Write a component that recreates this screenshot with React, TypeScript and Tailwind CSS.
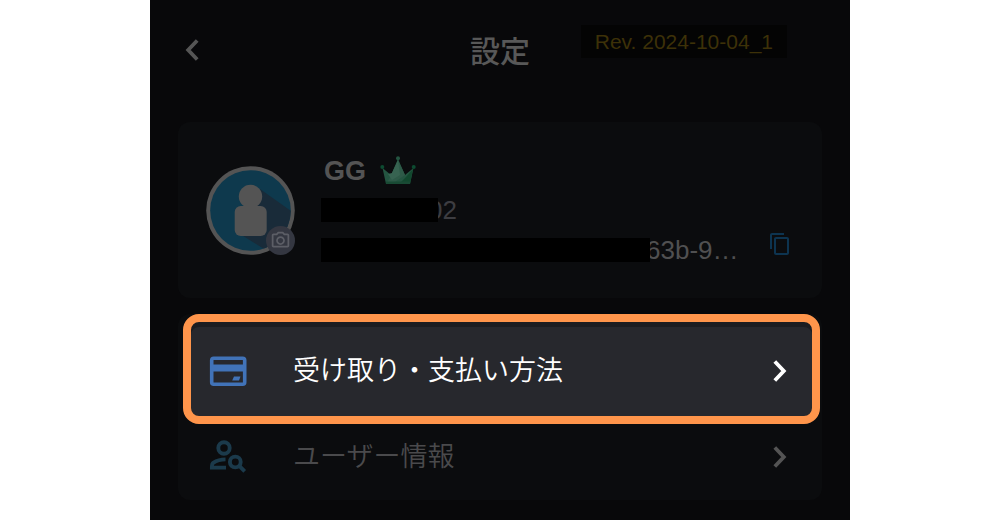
import React from "react";
import { MdContentCopy, MdOutlineCameraAlt } from "react-icons/md";

function Chevron({ className }: { className: string }) {
  return (
    <svg viewBox="0 0 14 22" className={className} fill="none" stroke="currentColor" strokeWidth="3.8" aria-hidden="true">
      <path d="M1.800 1.500 10.800 11 1.800 20.500" />
    </svg>
  );
}

function CardIcon() {
  return (
    <svg viewBox="0 0 38 30" className="h-[30px] w-[38px]" aria-hidden="true">
      <rect x="2.700" y="2.200" width="33" height="26" rx="2" fill="none" stroke="#4173b8" strokeWidth="3.600" />
      <path d="M3 8.500H35V15.500H3Z" fill="#4173b8" />
      <path d="M25 20.500H31.500L30 24.500H23.200Z" fill="#4173b8" />
    </svg>
  );
}

function PersonSearchIcon() {
  return (
    <svg viewBox="0 0 38 34" className="h-[34px] w-[38px]" fill="none" stroke="#1b3a4b" strokeWidth="3.900" aria-hidden="true">
      <circle cx="15" cy="8" r="5.700" />
      <path d="M16.500 19.400C11.500 19.400 7 21 4.200 22.800C3 23.700 2.900 24.700 2.900 27.600H17" />
      <circle cx="26.300" cy="22" r="5.400" />
      <path d="M30 25.700 35.700 31.400" />
    </svg>
  );
}

function Crown() {
  return (
    <svg viewBox="0 0 36 29" className="-mt-0.5 h-[29px] w-9" aria-hidden="true">
      <path d="M2.500 12 11 19 18 3 25 19 33.500 12 30 28H6Z" fill="#245541" />
      <path d="M18 4 25 19 12 28H6L12 18Z" fill="#2e5a48" />
      <path d="M33 13 30 28H19L26 21Z" fill="#12482e" />
      <path d="M18 4 20 19 12 24 8 18 12 17Z" fill="#376351" />
      <path d="M6 25.500H30V28H6Z" fill="#194a34" />
      <circle cx="18" cy="2.300" r="2" fill="#245541" />
      <circle cx="2.300" cy="11" r="2" fill="#0d4b31" />
      <circle cx="33.700" cy="11" r="2" fill="#0d4b31" />
    </svg>
  );
}

function Avatar() {
  return (
    <div className="relative shrink-0">
      <svg viewBox="0 0 90 90" className="size-[90px]" role="img" aria-label="GG">
        <defs>
          <clipPath id="disc">
            <circle cx="44.500" cy="45.500" r="40.300" />
          </clipPath>
        </defs>
        <circle cx="44.500" cy="45.500" r="44.300" fill="#545454" />
        <circle cx="44.500" cy="45.500" r="40.300" fill="#0e394d" />
        <path d="M54 24 92 51V90H68L34 69Z" fill="#192b39" clipPath="url(#disc)" />
        <circle cx="44.500" cy="31.500" r="11.700" fill="#545454" />
        <rect x="28.700" y="41" width="32" height="30" rx="6" fill="#545454" />
      </svg>
      <button type="button" aria-label="写真を変更" className="absolute right-px bottom-0 flex size-[29px] items-center justify-center rounded-full bg-[#343741] text-[#5c5e66]">
        <MdOutlineCameraAlt size={21} />
      </button>
    </div>
  );
}

export default function App() {
  return (
    <div className="min-h-screen bg-white font-['Liberation_Sans','Noto_Sans_CJK_JP',sans-serif]">
      <main className="mx-auto min-h-screen w-[70%] bg-[#08080a] px-7 pb-5">
        <header className="relative grid h-[122px] grid-cols-[1fr_auto_1fr] items-start">
          <button type="button" aria-label="戻る" className="mt-[39px] ml-[7px] w-fit text-[#555555]">
            <Chevron className="h-[22px] w-[14px] rotate-180" />
          </button>
          <h1 className="mt-8 text-[30px] leading-10 font-medium text-[#585858]">設定</h1>
          <p className="absolute top-[25px] right-[35px] bg-[#040404] px-3.5 text-[21px] leading-[33px] whitespace-nowrap text-[#3d3108]">
            Rev. 2024-10-04_1
          </p>
        </header>

        <section className="flex h-44 items-center rounded-xl bg-[#0b0c0e] pr-[30px] pl-7">
          <Avatar />
          <div className="ml-[25px] flex min-w-0 flex-1 flex-col pt-0.5">
            <div className="flex h-[38px] items-center gap-[14px] pl-[3px]">
              <h2 className="text-[27px] leading-8 font-bold text-[#545454]">GG</h2>
              <Crown />
            </div>
            <div className="flex h-10 items-center text-[26px] text-[#3d3d41]">
              <span className="z-10 h-6 w-[117px] bg-black" />
              <span className="-ml-[10px]">02</span>
            </div>
            <div className="flex h-10 items-center text-[26px] text-[#505051]">
              <span className="z-10 h-6 w-[329px] bg-black" />
              <span className="-ml-1">63b-9…</span>
            </div>
          </div>
          <button type="button" aria-label="コピー" className="mt-[68px] text-[#0d3450]">
            <MdContentCopy size={24} />
          </button>
        </section>

        <nav className="mt-4 rounded-xl bg-[#0b0c0e] pr-[2px] pb-2.5 pl-[5px]">
          <a href="#payment" className="flex h-[110px] items-center rounded-2xl border-8 border-[#ff954b] bg-[#27282d] pt-1 pr-[25px] pl-[18px] shadow-[inset_0_5px_0_#1c1d21]">
            <CardIcon />
            <span className="ml-[46px] flex-1 text-[27px] leading-10 font-[350] text-white">受け取り・支払い方法</span>
            <Chevron className="h-[22px] w-[14px] text-white" />
          </a>
          <a href="#user" className="flex h-[66px] items-center pr-[33px] pl-[26px]">
            <PersonSearchIcon />
            <span className="ml-[46px] flex-1 text-[27px] leading-10 font-[350] text-[#4a4a4c]">ユーザー情報</span>
            <Chevron className="h-[22px] w-[14px] text-[#545454]" />
          </a>
        </nav>
      </main>
    </div>
  );
}
